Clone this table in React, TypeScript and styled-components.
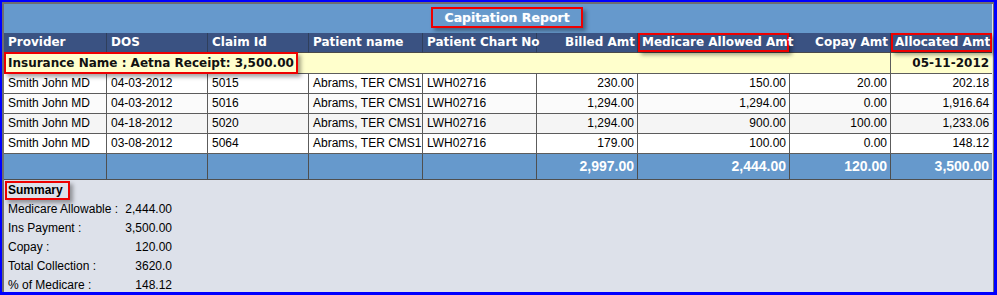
import React from 'react';
import styled, { createGlobalStyle, css } from 'styled-components';

const GlobalStyle = createGlobalStyle`
  html, body {
    margin: 0;
    padding: 0;
    background: #ffffff;
  }
`;

interface ClaimRow {
  provider: string;
  dos: string;
  claimId: string;
  patient: string;
  chartNo: string;
  billed: string;
  allowed: string;
  copay: string;
  allocated: string;
  shade?: string;
}

const rows: ClaimRow[] = [
  { provider: 'Smith John MD', dos: '04-03-2012', claimId: '5015', patient: 'Abrams, TER CMS1', chartNo: 'LWH02716', billed: '230.00', allowed: '150.00', copay: '20.00', allocated: '202.18' },
  { provider: 'Smith John MD', dos: '04-03-2012', claimId: '5016', patient: 'Abrams, TER CMS1', chartNo: 'LWH02716', billed: '1,294.00', allowed: '1,294.00', copay: '0.00', allocated: '1,916.64', shade: '#fbfbfb' },
  { provider: 'Smith John MD', dos: '04-18-2012', claimId: '5020', patient: 'Abrams, TER CMS1', chartNo: 'LWH02716', billed: '1,294.00', allowed: '900.00', copay: '100.00', allocated: '1,233.06', shade: '#f5f5f5' },
  { provider: 'Smith John MD', dos: '03-08-2012', claimId: '5064', patient: 'Abrams, TER CMS1', chartNo: 'LWH02716', billed: '179.00', allowed: '100.00', copay: '0.00', allocated: '148.12' }
];

const columnWidths = [103, 101, 101, 114, 114, 101, 152, 101, 101];

const summary = [
  ['Medicare Allowable :', '2,444.00'],
  ['Ins Payment :', '3,500.00'],
  ['Copay :', '120.00'],
  ['Total Collection :', '3620.0'],
  ['% of Medicare :', '148.12']
];

const Frame = styled.div`
  box-sizing: border-box;
  width: 997px;
  height: 295px;
  overflow: hidden;
  border: 2px solid #0000ff;
  border-right-width: 3px;
  border-bottom-width: 3px;
  background: #dde1ea;
`;

const Inner = styled.div`
  border: 2px solid #6f6f6f;
  border-bottom: none;
  border-right-width: 1px;
  height: 100%;
  box-sizing: border-box;
  background: #dde1ea;
`;

const Grid = styled.table`
  width: 988px;
  table-layout: fixed;
  border-collapse: separate;
  border-spacing: 0;
`;

const redMark = css`
  border: 2px solid #ee0000;
  box-shadow: 3px 3px 4px rgba(0, 0, 0, 0.35);
`;

const TitleCell = styled.td`
  box-sizing: border-box;
  height: 29px;
  padding: 0 0 3px;
  background: #6699cc;
  text-align: center;
`;

const Title = styled.span`
  ${redMark};
  display: inline-block;
  margin-left: 18px;
  padding: 0 11px;
  font: bold 12.5px/17px "DejaVu Sans", Verdana, sans-serif;
  color: #ffffff;
  vertical-align: middle;
  text-shadow: 0 0 1px rgba(255, 255, 255, 0.4);
`;

const HeadCell = styled.th<{ $right?: boolean }>`
  box-sizing: border-box;
  height: 20px;
  padding: 0 2px 0 4px;
  background: #3a5282;
  border-right: 1px solid #2f3f5c;
  border-bottom: 1px solid #4a4a4a;
  font: bold 12px/19px "DejaVu Sans", Verdana, sans-serif;
  color: #ffffff;
  text-align: ${(p) => (p.$right ? 'right' : 'left')};
  white-space: nowrap;
  overflow: visible;
  &:last-child {
    border-right: none;
  }
`;

const MarkedHead = styled.span`
  ${redMark};
  display: block;
  margin: 0 -2px 0 -4px;
  padding: 0 1px 0 2px;
  line-height: 15px;
  position: relative;
  z-index: 1;
`;

const InsuranceCell = styled.td<{ $right?: boolean }>`
  box-sizing: border-box;
  height: 21px;
  padding: 0 3px 0 0;
  background: #ffffcc;
  border-right: 1px solid #5c5c5c;
  border-bottom: 1px solid #5c5c5c;
  font: bold 12px/20px "DejaVu Sans", Verdana, sans-serif;
  color: #111111;
  text-align: ${(p) => (p.$right ? 'right' : 'left')};
  white-space: nowrap;
  &:last-child {
    border-right: none;
  }
`;

const InsuranceLabel = styled.span`
  ${redMark};
  display: block;
  width: fit-content;
  margin: -1px 0;
  padding: 0 2px;
  line-height: 18px;
  position: relative;
  z-index: 1;
`;

const DataRow = styled.tr<{ $shade?: string }>`
  background: ${(p) => p.$shade ?? '#ffffff'};
`;

const DataCell = styled.td<{ $right?: boolean }>`
  box-sizing: border-box;
  height: 20px;
  padding: ${(p) => (p.$right ? '0 3px 0 0' : '0 0 0 4px')};
  border-right: 1px solid #5c5c5c;
  border-bottom: 1px solid #5c5c5c;
  font: 12px/19px "Liberation Sans", Arial, sans-serif;
  color: #000000;
  text-align: ${(p) => (p.$right ? 'right' : 'left')};
  white-space: nowrap;
  overflow: hidden;
  &:last-child {
    border-right: none;
  }
`;

const TotalCell = styled.td`
  box-sizing: border-box;
  height: 26px;
  padding: 0 3px 0 0;
  background: #6699cc;
  border-right: 1px solid #4f4f4f;
  border-bottom: 1px solid #4f4f4f;
  font: bold 14px/25px "Liberation Sans", Arial, sans-serif;
  color: #ffffff;
  text-align: right;
  &:last-child {
    border-right: none;
  }
`;

const SummaryPanel = styled.div`
  padding: 1px 0 0 1px;
  font: 12px/19px "Liberation Sans", Arial, sans-serif;
  color: #000000;
`;

const SummaryTitle = styled.div`
  ${redMark};
  width: fit-content;
  padding: 0 5px 0 1px;
  font-weight: bold;
  line-height: 15px;
`;

const SummaryList = styled.div`
  display: grid;
  grid-template-columns: 116px 48px;
  padding-left: 3px;
`;

const SummaryValue = styled.span`
  text-align: right;
`;

export default function App() {
  return (
    <>
      <GlobalStyle />
      <Frame>
        <Inner>
          <Grid>
            <colgroup>
              {columnWidths.map((w, i) => (
                <col key={i} style={{ width: w }} />
              ))}
            </colgroup>
            <tbody>
              <tr>
                <TitleCell colSpan={9}>
                  <Title>Capitation Report</Title>
                </TitleCell>
              </tr>
              <tr>
                <HeadCell>Provider</HeadCell>
                <HeadCell>DOS</HeadCell>
                <HeadCell>Claim Id</HeadCell>
                <HeadCell>Patient name</HeadCell>
                <HeadCell>Patient Chart No</HeadCell>
                <HeadCell $right>Billed Amt</HeadCell>
                <HeadCell $right>
                  <MarkedHead>Medicare Allowed Amt</MarkedHead>
                </HeadCell>
                <HeadCell $right>Copay Amt</HeadCell>
                <HeadCell $right>
                  <MarkedHead>Allocated Amt</MarkedHead>
                </HeadCell>
              </tr>
              <tr>
                <InsuranceCell colSpan={8}>
                  <InsuranceLabel>Insurance Name : Aetna Receipt: 3,500.00</InsuranceLabel>
                </InsuranceCell>
                <InsuranceCell $right>05-11-2012</InsuranceCell>
              </tr>
              {rows.map((r) => (
                <DataRow key={r.claimId} $shade={r.shade}>
                  <DataCell>{r.provider}</DataCell>
                  <DataCell>{r.dos}</DataCell>
                  <DataCell>{r.claimId}</DataCell>
                  <DataCell>{r.patient}</DataCell>
                  <DataCell>{r.chartNo}</DataCell>
                  <DataCell $right>{r.billed}</DataCell>
                  <DataCell $right>{r.allowed}</DataCell>
                  <DataCell $right>{r.copay}</DataCell>
                  <DataCell $right>{r.allocated}</DataCell>
                </DataRow>
              ))}
              <tr>
                <TotalCell />
                <TotalCell />
                <TotalCell />
                <TotalCell />
                <TotalCell />
                <TotalCell>2,997.00</TotalCell>
                <TotalCell>2,444.00</TotalCell>
                <TotalCell>120.00</TotalCell>
                <TotalCell>3,500.00</TotalCell>
              </tr>
            </tbody>
          </Grid>
          <SummaryPanel>
            <SummaryTitle>Summary</SummaryTitle>
            <SummaryList>
              {summary.map(([label, value]) => (
                <React.Fragment key={label}>
                  <span>{label}</span>
                  <SummaryValue>{value}</SummaryValue>
                </React.Fragment>
              ))}
            </SummaryList>
          </SummaryPanel>
        </Inner>
      </Frame>
    </>
  );
}
